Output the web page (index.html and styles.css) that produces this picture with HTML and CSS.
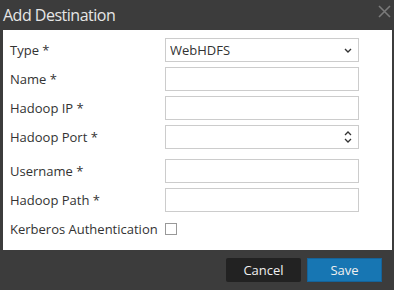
FILE: index.html
```html
<!DOCTYPE html>
<html lang="en">
<head>
    <meta charset="UTF-8">
    <title>Add Destination</title>
    <link rel="stylesheet" href="styles.css">
</head>
<body>
    <div class="dialog">
        <div class="header">
            <span class="title">Add Destination</span>
            <svg class="close" width="13" height="13" viewBox="0 0 13 13">
                <path d="M1 1L12 12M12 1L1 12" stroke="#7a7a7a" stroke-width="1.6" fill="none"/>
            </svg>
        </div>
        <form class="content">
            <div class="row">
                <label>Type *</label>
                <div class="field">
                    <select class="control">
                        <option>WebHDFS</option>
                    </select>
                    <svg class="icon" width="8" height="5" viewBox="0 0 8 5">
                        <path d="M1 1L4 4L7 1" stroke="#333" stroke-width="1.4" fill="none"/>
                    </svg>
                </div>
            </div>
            <div class="row">
                <label>Name *</label>
                <div class="field"><input class="control" type="text"></div>
            </div>
            <div class="row">
                <label>Hadoop IP *</label>
                <div class="field"><input class="control" type="text"></div>
            </div>
            <div class="row">
                <label>Hadoop Port *</label>
                <div class="field">
                    <input class="control" type="text">
                    <svg class="icon spin" width="8" height="12" viewBox="0 0 8 12">
                        <path d="M1 4L4 1L7 4M1 8L4 11L7 8" stroke="#333" stroke-width="1.3" fill="none"/>
                    </svg>
                </div>
            </div>
            <div class="row gap">
                <label>Username *</label>
                <div class="field"><input class="control" type="text"></div>
            </div>
            <div class="row">
                <label>Hadoop Path *</label>
                <div class="field"><input class="control" type="text"></div>
            </div>
            <div class="row">
                <label>Kerberos Authentication</label>
                <div class="field"><input class="check" type="checkbox"></div>
            </div>
        </form>
        <div class="footer">
            <button class="btn cancel">Cancel</button>
            <button class="btn save">Save</button>
        </div>
    </div>
</body>
</html>
```

FILE: styles.css
```css
html,body{
    margin: 0;
    height: 100%;
    background: #3c3c3c;
}
.dialog{
    width: 394px;
    height: 290px;
    font-family: "Open Sans", sans-serif;
}
.header{
    height: 30px;
    display: flex;
    align-items: center;
    justify-content: space-between;
    padding: 0 3px 0 3px;
}
.header .title{
    color: #e6e6e6;
    font-size: 16px;
    letter-spacing: -0.5px;
    margin-top: -1px;
}
.header .close{
    margin-top: -7px;
}
.content{
    background: #fff;
    margin: 0 2px 0 3px;
    height: 220px;
    box-sizing: border-box;
    padding: 8px 0 0 7px;
    display: flex;
    flex-direction: column;
    gap: 5px;
}
.row{
    display: flex;
    align-items: center;
    height: 24px;
}
.row.gap{
    margin-top: 5px;
}
.row label{
    width: 155px;
    font-size: 13px;
    color: #333;
}
.field{
    position: relative;
    width: 194px;
    height: 24px;
    display: flex;
    align-items: center;
}
.control{
    appearance: none;
    width: 194px;
    height: 24px;
    box-sizing: border-box;
    border: 1px solid #ccc;
    border-radius: 0;
    background: #fff;
    margin: 0;
    padding: 0 4px;
    font-family: "Open Sans", sans-serif;
    font-size: 13px;
    color: #333;
    outline: none;
}
.icon{
    position: absolute;
    right: 7px;
    top: 10px;
}
.icon.spin{
    top: 6px;
}
.check{
    appearance: none;
    width: 12px;
    height: 12px;
    margin: 0;
    border: 1px solid #999;
    background: #fff;
}
.footer{
    height: 40px;
    display: flex;
    justify-content: flex-end;
    align-items: center;
    gap: 6px;
    padding-right: 12px;
}
.btn{
    height: 24px;
    border: none;
    font-family: "Open Sans", sans-serif;
    font-size: 13px;
    color: #f0f0f0;
    padding: 0;
}
.cancel{
    width: 75px;
    background: #222;
    border-radius: 2px;
}
.save{
    width: 75px;
    background: #1776b3;
    border: 1px solid #15639a;
}
```
